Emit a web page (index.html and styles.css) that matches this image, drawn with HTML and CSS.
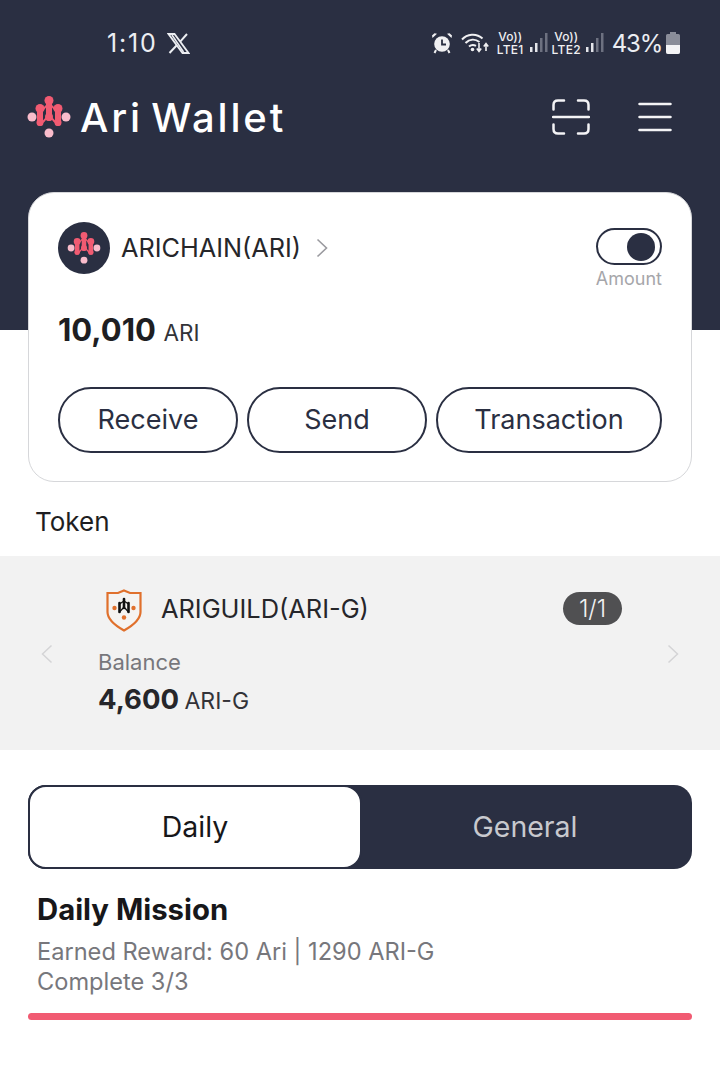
FILE: index.html
```html
<!DOCTYPE html>
<html lang="en">
<head>
<meta charset="utf-8">
<title>Ari Wallet</title>
<link rel="stylesheet" href="styles.css">
</head>
<body>
<svg class="defs" width="0" height="0" aria-hidden="true">
  <symbol id="ari" viewBox="0 0 50 50">
    <g fill="none" stroke="#f15b72" stroke-linecap="round">
      <path d="M25 9V26" stroke-width="6"/>
      <path d="M16 17V31" stroke-width="6"/>
      <path d="M34 17V31" stroke-width="6"/>
      <path d="M16 19C20 19 21 13 25 12M34 19C30 19 29 13 25 12" stroke-width="1.800"/>
      <path d="M25 24C21 25 21 31 16 31M25 24C29 25 29 31 34 31" stroke-width="1.800"/>
    </g>
    <g fill="#f15b72">
      <circle cx="25" cy="8.500" r="4.500"/>
      <circle cx="16" cy="16.500" r="4.500"/>
      <circle cx="34" cy="16.500" r="4.500"/>
      <circle cx="25" cy="25" r="4"/>
      <circle cx="16" cy="30.500" r="3.500"/>
      <circle cx="34" cy="30.500" r="3.500"/>
    </g>
    <circle cx="8" cy="25" r="4.500" fill="#f9bccb"/>
    <circle cx="42" cy="25" r="4.500" fill="#f9bccb"/>
    <circle cx="25" cy="41" r="4.500" fill="#f9bccb"/>
  </symbol>
</svg>

<header class="hero">
  <div class="status">
    <div class="status-left">
      <span class="time">1:10</span>
      <svg class="ic-x" width="23" height="21" viewBox="0 0 23 21" aria-label="X">
        <path d="M1.500 1H7.500L21.500 20H15.500Z" fill="none" stroke="#eceef2" stroke-width="1.800"/>
        <path d="M20 1L13.200 8.600M9.800 12.300L2.500 20" fill="none" stroke="#eceef2" stroke-width="2"/>
        <path d="M5 2L16.500 19" stroke="#eceef2" stroke-width="1.500"/>
      </svg>
    </div>
    <div class="status-right">
      <svg class="ic-alarm" width="22" height="22" viewBox="0 0 22 22">
        <circle cx="11" cy="12" r="7.800" fill="#f0f0f2"/>
        <path d="M11 7.500V12.500H15" fill="none" stroke="#2a2f42" stroke-width="1.800"/>
        <path d="M1.500 6L6 1.800L3.500 1.200L1 3.500ZM20.500 6L16 1.800L18.500 1.200L21 3.500Z" fill="#f0f0f2"/>
        <path d="M5 18L3.500 21M17 18L18.500 21" stroke="#f0f0f2" stroke-width="2"/>
      </svg>
      <svg class="ic-wifi" width="29" height="22" viewBox="0 0 29 22">
        <g fill="none" stroke="#f0f0f2" stroke-width="2">
          <path d="M1 7.500C6 2 15 0.500 21.500 6.500"/>
          <path d="M4.500 11C8.500 7 14 6.500 18.500 10"/>
          <path d="M8 14.500C10 12.800 12.500 12.500 15 13.800"/>
        </g>
        <circle cx="11.500" cy="17.500" r="1.800" fill="#f0f0f2"/>
        <path d="M18 11V19M15.800 16.500L18 19.500L20.200 16.500M25 19V12M22.800 14.500L25 11.500L27.200 14.500" fill="none" stroke="#f0f0f2" stroke-width="1.600"/>
      </svg>
      <div class="sim">
        <span class="sim-vo">Vo))</span>
        <span class="sim-lte">LTE1</span>
      </div>
      <svg class="ic-bars" width="19" height="21" viewBox="0 0 19 21">
        <rect x="1" y="14" width="2.500" height="5" fill="#e4e5ea"/>
        <rect x="6" y="10" width="2.500" height="9" fill="#e4e5ea"/>
        <rect x="11" y="5" width="2.500" height="14" fill="#6d7180"/>
        <rect x="16" y="0" width="2.500" height="19" fill="#6d7180"/>
      </svg>
      <div class="sim">
        <span class="sim-vo">Vo))</span>
        <span class="sim-lte">LTE2</span>
      </div>
      <svg class="ic-bars" width="19" height="21" viewBox="0 0 19 21">
        <rect x="1" y="14" width="2.500" height="5" fill="#e4e5ea"/>
        <rect x="6" y="10" width="2.500" height="9" fill="#e4e5ea"/>
        <rect x="11" y="5" width="2.500" height="14" fill="#6d7180"/>
        <rect x="16" y="0" width="2.500" height="19" fill="#6d7180"/>
      </svg>
      <span class="pct">43%</span>
      <svg class="ic-batt" width="14" height="22" viewBox="0 0 14 22">
        <path d="M4 0H10V2H12.500Q14 2 14 3.500V20Q14 22 12 22H2Q0 22 0 20V3.500Q0 2 1.500 2H4Z" fill="#8a8d99"/>
        <path d="M0 13H14V20Q14 22 12 22H2Q0 22 0 20Z" fill="#f4f4f6"/>
      </svg>
    </div>
  </div>

  <div class="brand-row">
    <div class="brand">
      <svg class="brand-logo" width="50" height="50"><use href="#ari"/></svg>
      <span class="brand-name">Ari Wallet</span>
    </div>
    <div class="actions">
      <svg width="38" height="36" viewBox="0 0 38 36">
        <g fill="none" stroke="#f4f4f6" stroke-width="2.500" stroke-linecap="round">
          <path d="M12 1.500H6Q1.500 1.500 1.500 6V10.500"/>
          <path d="M26 1.500H32Q36.500 1.500 36.500 6V10.500"/>
          <path d="M12 34.500H6Q1.500 34.500 1.500 30V25.500"/>
          <path d="M26 34.500H32Q36.500 34.500 36.500 30V25.500"/>
          <path d="M1 18H37"/>
        </g>
      </svg>
      <svg width="34" height="30" viewBox="0 0 34 30">
        <g stroke="#f4f4f6" stroke-width="2.500" stroke-linecap="round">
          <path d="M1.500 2H32.500M1.500 15H32.500M1.500 28H32.500"/>
        </g>
      </svg>
    </div>
  </div>
</header>

<main>
  <section class="card">
    <div class="card-top">
      <div class="chain">
        <span class="chain-icon"><svg width="38" height="38"><use href="#ari"/></svg></span>
        <span class="chain-name">ARICHAIN(ARI)</span>
        <svg class="chev" width="12" height="20" viewBox="0 0 12 20"><path d="M1.500 1.500L10.500 10L1.500 18.500" fill="none" stroke="#9a9a9f" stroke-width="1.600"/></svg>
      </div>
      <div class="toggle-wrap">
        <span class="toggle"><span class="knob"></span></span>
        <span class="toggle-label">Amount</span>
      </div>
    </div>
    <div class="amount"><b>10,010</b> <span>ARI</span></div>
    <div class="buttons">
      <button class="btn btn-a">Receive</button>
      <button class="btn btn-a">Send</button>
      <button class="btn btn-b">Transaction</button>
    </div>
  </section>

  <h2 class="section-title">Token</h2>

  <section class="carousel">
    <svg class="arrow" width="12" height="20" viewBox="0 0 12 20"><path d="M10.500 1.500L1.500 10L10.500 18.500" fill="none" stroke="#d4d4d6" stroke-width="1.500"/></svg>
    <div class="token">
      <div class="token-top">
        <div class="token-id">
          <svg class="shield" width="38" height="44" viewBox="0 0 38 44">
            <path d="M19 2.500L25 5H35.500V24C35.500 32 27 38 19 42.500C11 38 2.500 32 2.500 24V5H13Z" fill="#f5f3f1" stroke="#e0702c" stroke-width="2.200"/>
            <circle cx="9.500" cy="20" r="2.200" fill="#e0702c"/>
            <circle cx="28.500" cy="20" r="2.200" fill="#e0702c"/>
            <circle cx="19" cy="29.500" r="2.200" fill="#e0702c"/>
            <g fill="none" stroke="#111" stroke-width="2.600" stroke-linecap="round">
              <path d="M19 11V20"/><path d="M14.500 15V24"/><path d="M23.500 15V24"/>
              <path d="M14.500 16L19 13L23.500 16M14.500 24L19 19L23.500 24" stroke-width="1.300"/>
            </g>
          </svg>
          <span class="token-name">ARIGUILD(ARI-G)</span>
        </div>
        <span class="pill">1/1</span>
      </div>
      <div class="token-label">Balance</div>
      <div class="token-amount"><b>4,600</b> <span>ARI-G</span></div>
    </div>
    <svg class="arrow" width="12" height="20" viewBox="0 0 12 20"><path d="M1.500 1.500L10.500 10L1.500 18.500" fill="none" stroke="#d4d4d6" stroke-width="1.500"/></svg>
  </section>

  <nav class="tabs">
    <span class="tab tab-on">Daily</span>
    <span class="tab tab-off">General</span>
  </nav>

  <section class="mission">
    <h3 class="mission-title">Daily Mission</h3>
    <p class="mission-text">Earned Reward: 60 Ari | 1290 ARI-G<br>Complete 3/3</p>
  </section>
  <div class="progress"></div>
</main>
</body>
</html>
```
FILE: styles.css
```css
* { box-sizing: border-box; }
html, body { margin: 0; padding: 0; }
body {
  width: 720px;
  height: 1068px;
  overflow: hidden;
  background: #fff;
  color: #1e1e22;
  font-family: "Inter", "Liberation Sans", sans-serif;
}
.defs { display: block; height: 0; }

.hero {
  height: 330px;
  background: #2a2f42;
  padding-top: 28px;
}
.status {
  height: 30px;
  display: flex;
  justify-content: space-between;
  align-items: center;
  padding: 0 40px 0 107px;
  color: #eceef2;
}
.status-left { display: flex; align-items: center; gap: 9px; }
.time { font-size: 25px; font-weight: 400; letter-spacing: 1.800px; }
.status-right { display: flex; align-items: center; }
.ic-alarm { margin-right: 8px; }
.ic-wifi { margin-right: 7px; }
.sim {
  display: flex;
  flex-direction: column;
  align-items: center;
  width: 27px;
  margin-right: 5px;
  font-size: 12px;
  line-height: 13px;
  font-weight: 500;
  color: #f0f0f2;
  white-space: nowrap;
}
.sim-lte { letter-spacing: 0.300px; }
.ic-bars { margin-right: 5px; }
.pct { font-size: 24px; letter-spacing: -1.200px; margin: 0 4px 0 3px; color: #eceef2; }

.brand-row {
  display: flex;
  justify-content: space-between;
  align-items: center;
  margin-top: 29px;
  height: 60px;
  padding: 0 48px 0 24px;
}
.brand { display: flex; align-items: center; gap: 6px; }
.brand-name {
  font-size: 40px;
  font-weight: 500;
  letter-spacing: 2.800px;
  word-spacing: -5px;
  color: #fff;
}
.actions { display: flex; align-items: center; gap: 48px; }

.card {
  margin: -138px 28px 0;
  height: 290px;
  position: relative;
  background: #fff;
  border: 1.500px solid #d6d7da;
  border-radius: 26px;
  padding: 29px 29px 0;
}
.card-top { display: flex; justify-content: space-between; align-items: flex-start; }
.chain { display: flex; align-items: center; height: 52px; }
.chain-icon {
  width: 52px;
  height: 52px;
  border-radius: 50%;
  background: #2a2f42;
  display: flex;
  align-items: center;
  justify-content: center;
  margin-right: 11px;
}
.chain-name { font-size: 25.300px; color: #26262a; padding-bottom: 2px; }
.chev { margin-left: 15px; }
.toggle-wrap { display: flex; flex-direction: column; align-items: center; margin-top: 6px; }
.toggle {
  width: 66px;
  height: 37px;
  border: 2px solid #2a2f42;
  border-radius: 19px;
  display: flex;
  align-items: center;
  justify-content: flex-end;
  padding-right: 5px;
}
.knob { width: 28px; height: 28px; border-radius: 50%; background: #2a2f42; }
.toggle-label { font-size: 18px; line-height: 28px; color: #a6a6aa; }
.amount { margin-top: 17px; height: 40px; line-height: 40px; }
.amount b { font-size: 31px; font-weight: 700; color: #1e1e22; }
.amount span { font-size: 22.500px; color: #333338; margin-left: 3px; }
.buttons { display: flex; gap: 9px; margin-top: 37px; }
.btn {
  height: 66px;
  background: #fff;
  border: 2px solid #2a2f42;
  border-radius: 33px;
  font: 400 27px "Inter", sans-serif;
  color: #2a2f42;
  padding: 0 0 2px;
}
.btn-a { width: 180px; }
.btn-b { width: 226px; }

.section-title {
  margin: 0;
  padding: 22px 35px 0;
  height: 74px;
  font-size: 26px;
  line-height: 36px;
  font-weight: 400;
  color: #1e1e22;
}

.carousel {
  height: 194px;
  background: #f2f2f2;
  display: flex;
  align-items: center;
  justify-content: space-between;
  padding: 0 41px;
}
.arrow { flex: none; margin-top: 2px; }
.token { width: 524px; align-self: flex-start; padding-top: 30px; margin: 0 12px; }
.token-top { display: flex; justify-content: space-between; align-items: flex-start; }
.token-id { display: flex; align-items: center; gap: 18px; margin-left: 7px; height: 44px; }
.shield { margin-top: 4px; }
.token-name { font-size: 25.400px; color: #26262a; }
.pill {
  margin-top: 6px;
  width: 59px;
  height: 33px;
  border-radius: 17px;
  background: #505052;
  color: #f2f2f2;
  font-size: 24px;
  line-height: 33px;
  text-align: center;
  font-weight: 300;
}
.token-label { font-size: 22px; line-height: 28px; color: #77777c; margin-top: 18px; }
.token-amount { line-height: 40px; margin-top: 3px; }
.token-amount b { font-size: 27.500px; font-weight: 700; color: #26262a; }
.token-amount span { font-size: 23px; color: #333338; margin-left: 1px; }

.tabs {
  margin: 35px 28px 0;
  height: 84px;
  background: #2a2f42;
  border-radius: 18px;
  display: flex;
}
.tab {
  flex: 1;
  display: flex;
  align-items: center;
  justify-content: center;
  font-size: 28.500px;
  padding-bottom: 2px;
  color: #c8c9ce;
}
.tab-off { padding-right: 4px; }
.tab-on {
  flex: none;
  width: 334px;
  background: #fff;
  color: #17171a;
  border: 2px solid #2a2f42;
  border-radius: 18px;
}

.mission { padding: 21px 37px 0; }
.mission-title { margin: 0; font-size: 29.300px; line-height: 40px; font-weight: 700; color: #17171a; }
.mission-text { margin: 7px 0 0; font-size: 23.600px; line-height: 30px; color: #77777c; }
.progress { margin: 16px 28px 0; height: 7px; border-radius: 4px; background: #f15b72; }
```
